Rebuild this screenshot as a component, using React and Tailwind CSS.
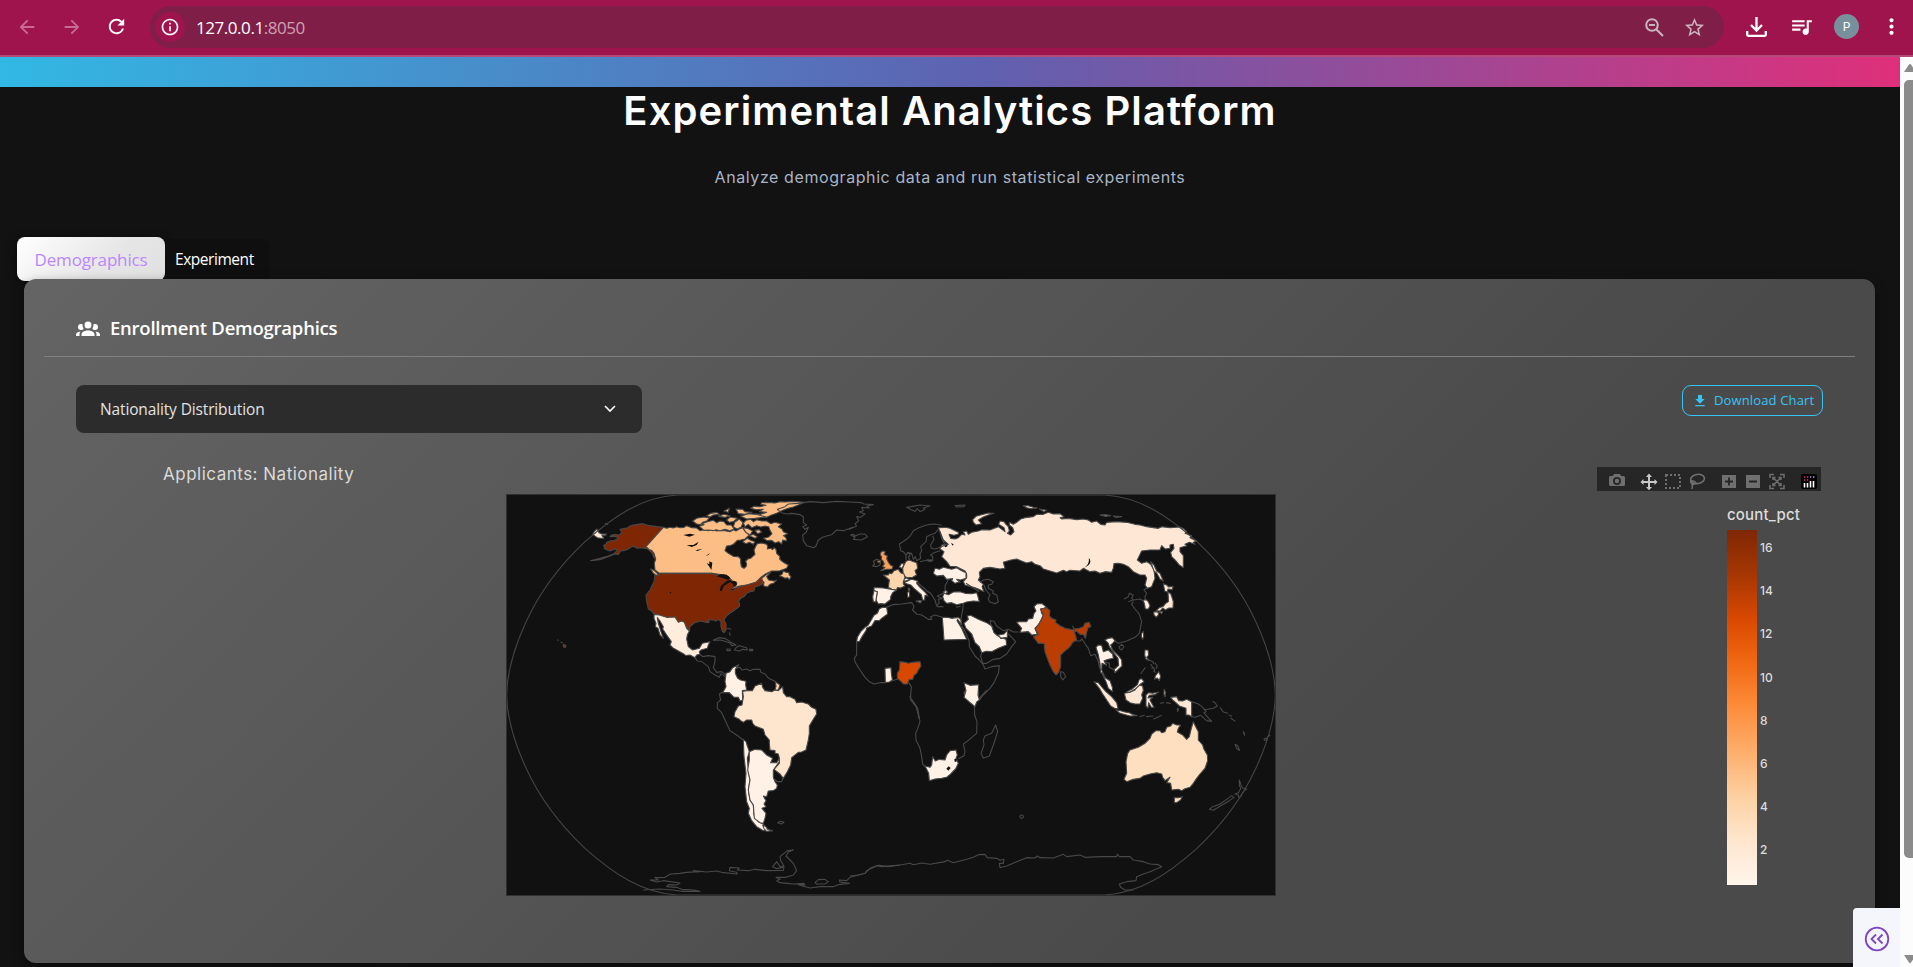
import React from "react";
import {
  MdArrowBack,
  MdArrowForward,
  MdRefresh,
  MdInfoOutline,
  MdZoomOut,
  MdStarBorder,
  MdQueueMusic,
  MdMoreVert,
} from "react-icons/md";

const INTER = "font-['Inter',sans-serif]";
const OPEN = "font-['Open_Sans',sans-serif]";

function BrowserBar() {
  return (
    <header className="flex h-[57px] shrink-0 items-start border-b-2 border-[#b4497a] bg-[#a0144e]">
      <div className="flex h-[53px] w-[150px] shrink-0 items-center pl-[16px] text-[#c96b93]">
        <MdArrowBack size={22} />
        <MdArrowForward size={22} className="ml-[23px]" />
        <MdRefresh size={23} className="ml-[22px] text-white" />
      </div>
      <div className="mt-[6px] flex h-[42px] w-[1574px] shrink-0 items-center rounded-full bg-[#7f1e47] pr-[18px]">
        <div className="ml-[5px] flex h-[30px] w-[30px] items-center justify-center rounded-full bg-[#a0144e] text-white">
          <MdInfoOutline size={20} />
        </div>
        <div className={`${OPEN} mt-[1px] ml-[11px] text-[17px] leading-[24px] tracking-[-0.45px] text-white`}>
          127.0.0.1<span className="text-[#cfa0b4]">:8050</span>
        </div>
        <div className="ml-auto flex items-center gap-[17px] text-[#c9b5be]">
          <svg width="23" height="23" viewBox="0 0 23 23" fill="none" stroke="currentColor" strokeWidth="2">
            <circle cx="9" cy="9" r="5.800" />
            <path d="M13.200 13.200l6.800 6.800M6 9h6" />
          </svg>
          <MdStarBorder size={23} />
        </div>
      </div>
      <div className="flex h-[53px] grow items-center pl-[21px] text-white">
        <svg width="23" height="23" viewBox="0 0 23 23" fill="none" stroke="currentColor" strokeWidth="2.3">
          <path d="M11.500 2v13.500M6 10l5.500 5.500L17 10" />
          <path d="M2.200 16v3.800q0 1 1 1h16.600q1 0 1-1V16" />
        </svg>
        <MdQueueMusic size={25} className="ml-[21px]" />
        <div className={`${INTER} ml-[20px] flex h-[25px] w-[25px] shrink-0 items-center justify-center rounded-full bg-[#78909c] text-[12px]`}>
          P
        </div>
        <MdMoreVert size={25} className="ml-[20px] shrink-0" />
      </div>
    </header>
  );
}

const LINE = "none";
const C = {
  us: "#7f2704",
  ca: "#fdbe85",
  mx: "#feecdc",
  pale: "#fff1e5",
  br: "#fee5ce",
  ru: "#fee8d5",
  au: "#fedfc0",
  de: "#fdd5ad",
  uk: "#fda057",
  ind: "#bb3d02",
  ng: "#d94801",
  sea: "#111111",
};

/* Shapes are grouped by quadrant, three units to a pixel. */
const NORTH_WEST = [
  [C.ru, "M278,148 L284,138 291,132 297,143 305,147 320,147 316,151 306,151 312,160 302,160 292,158 286,154Z"],
  [C.us, "M490,127 L470,125 450,122 438,119 428,116 415,118 400,120 388,124 384,128 368,131 360,133 366,143 358,150 345,149 335,150 330,155 345,154 355,158 350,163 342,167 330,168 320,172 318,177 310,182 315,186 312,190 320,194 330,198 345,192 352,196 342,206 325,213 300,220 272,227 300,224 330,213 345,207 355,208 362,198 375,196 385,192 393,186 400,184 412,190 422,188 437,190 450,194 458,192 464,205 460,212 467,214 468,224 462,218 457,205 448,196 438,188 438,185Z"],
  [C.ca, "M490,127 L500,130 510,127 520,129 530,125 540,128 552,127 560,122 575,128 590,129 600,137 612,134 625,137 638,134 650,138 662,136 675,137 690,140 700,134 708,138 718,132 728,128 738,142 748,150 735,162 722,165 712,166 700,178 690,182 680,183 675,197 685,205 700,214 715,215 722,222 722,232 724,245 732,250 738,245 740,238 737,228 744,222 752,220 765,208 762,195 768,182 772,176 785,174 800,178 803,184 802,192 812,190 818,194 822,188 828,193 830,205 840,215 839,222 845,228 855,235 865,240 860,250 838,258 815,258 798,266 785,275 770,292 740,300 715,304 692,318 694,310 708,303 710,292 695,287 686,276 672,270 636,265 478,265 465,255 463,235 467,222 462,205 455,196 448,194 438,185Z"],
  [C.ca, "M782,282 L795,272 806,264 812,262 800,275 806,285 822,288 830,285 822,294 810,298 802,306 790,302 792,292Z"],
  [C.ca, "M838,272 L846,268 850,258 858,262 866,262 868,270 873,275 868,284 862,278 855,280 848,276Z"],
  [C.ca, "M452,252 L462,256 475,268 468,272 458,262Z"],
  [C.ca, "M912,52 L880,49 855,51 840,50 825,54 800,52 785,53 782,58 798,61 780,65 762,64 752,70 770,74 790,73 778,80 800,82 782,88 765,87 775,96 800,97 815,90 830,85 850,75 865,70 880,66 895,60Z"],
  [C.ca, "M578,108 L590,100 612,96 628,99 620,108 608,112 602,119 590,117Z"],
  [C.ca, "M598,124 L612,119 602,118 622,110 640,106 650,113 660,108 672,110 680,120 694,120 702,132 690,137 675,133 660,137 648,134 640,137 625,135 612,136 605,130Z"],
  [C.ca, "M730,114 L738,106 752,103 760,110 770,104 785,108 800,108 812,116 825,112 845,117 835,125 846,132 850,140 863,146 850,152 858,158 860,168 848,165 845,177 836,170 825,174 815,166 802,167 790,160 806,156 816,146 810,136 806,125 795,123 782,126 770,122 755,128 745,118 735,125Z"],
  [C.ca, "M620,92 L632,85 650,82 658,88 640,90 630,96Z M655,94 L672,88 690,92 676,97Z M672,78 L688,70 685,82Z M680,105 L690,96 712,100 700,110 688,112Z M708,72 L728,73 735,80 756,82 735,88 715,86Z M700,126 L704,112 718,102 729,113 724,126 712,132Z M722,94 L745,86 768,88 798,96 765,100 740,102Z M748,152 L760,148 772,155 765,160Z M728,170 L742,160 752,166 765,170 760,178 748,172 738,176Z M765,136 L778,134 785,142 772,146Z M728,128 L742,130 758,138 750,150 738,142Z"],
  [C.us, "M478,265 L636,265 650,270 672,270 686,276 695,287 710,295 700,308 692,318 715,306 740,300 755,296 770,290 780,280 785,278 788,296 775,303 765,305 762,318 750,320 740,325 732,335 722,340 715,350 719,356 718,365 700,378 685,388 678,395 672,405 678,418 678,435 672,443 667,438 663,425 663,410 655,403 648,408 640,405 625,405 627,412 618,412 600,408 585,413 575,420 570,425 568,438 560,430 553,412 545,408 535,412 525,396 500,398 485,395 475,390 460,385 455,378 445,372 440,350 438,330 450,315 462,290 465,270 475,272Z"],
  [C.mx, "M462,388 L478,390 500,397 525,396 535,412 545,408 553,412 560,430 568,438 562,450 560,462 565,485 578,495 598,490 607,475 630,470 625,480 622,490 605,494 598,500 600,508 590,510 585,518 570,510 558,512 550,506 530,495 518,488 510,480 514,470 500,450 488,432 490,425 480,408 472,398 475,415 483,440 490,460 480,450 474,430 466,425 468,415 462,400Z"],
  [LINE, "M640,466 L655,458 675,460 690,470 708,480 695,482 690,474 672,468 660,465Z M703,495 L710,486 718,482 740,488 742,495 728,493 718,498Z M680,492h10l1,5 -10,0z M748,493l10,0 0,4 -9,0z M680,430l14,3 M688,442l3,10 M315,115l10,4"],
  [LINE, "M585,518 L592,528 604,529 612,535 625,545 630,560 645,570 658,577 663,566 678,577 M600,508 L608,515 625,512 645,515 645,530 640,548 650,562 665,560 678,570"],
  [C.us, "M172,464l4,3 M182,471l6,3 M190,478l8,4 -3,6 -4,-2z"],
  [C.sea, "M550,150L570,146 585,149 568,155Z M560,180L580,180 596,170 590,180 575,186Z M586,196l22,-5 -15,7z M617,213l13,-9 -5,6z M620,234l8,4 0,-9 9,4 -3,22 -6,-10z M650,274L662,268 680,269 690,278 685,285 670,280Z M659,318L662,304 680,288 690,285 700,292 690,292 672,302 665,318Z M690,290L705,288 711,298 700,306 700,298Z M688,316l20,-8 -8,7z M509,322l4,-2 0,6z"],
];

const ATLANTIC = [
  [LINE, "M262,28 L285,20 295,12 325,10 360,5 400,8 440,4 480,6 515,8 522,12 550,14 530,18 538,24 515,22 520,32 508,36 525,42 512,52 500,50 506,62 495,72 500,78 478,88 488,82 460,92 440,90 425,104 410,108 398,112 385,120 378,138 372,143 350,137 340,122 338,105 348,98 355,82 345,88 338,80 350,75 340,68 340,50 330,44 305,40 290,42 275,38Z"],
  [LINE, "M482,105 L490,103 495,108 510,102 525,102 532,110 515,120 490,118 495,112Z M650,22 L668,19 690,15 720,18 700,24 705,28 690,35 682,26 675,34 665,30Z M795,17 L825,15 822,20 800,21Z"],
  [C.uk, "M572,158 L578,153 586,155 582,163 592,168 590,176 596,188 602,196 609,199 606,207 590,208 572,212 585,203 577,199 583,192 579,183 574,178 575,170 571,165Z M562,184l8,-3 1,6 -6,1z"],
  [LINE, "M548,198 L554,192 550,184 560,178 572,182 570,195 560,200Z M648,165 L640,155 632,152 628,132 650,118 662,106 670,92 685,84 700,78 720,73 735,72 755,76 M745,88 L735,100 722,104 710,110 708,125 692,140 695,152 690,162 692,175 680,182 676,170 670,178 665,160 650,158 M750,95 L755,115 765,135 752,142 735,147 724,145 722,135 732,118 728,108 M690,185 L712,180 728,182 728,170 722,165 732,158 750,152 M648,180 L648,165 657,158 660,165 655,172 660,180"],
  [C.de, "M648,184 L658,180 665,183 680,188 683,205 675,212 680,225 668,232 650,233 640,225 638,205 642,195Z"],
  [C.pale, "M628,202 L633,192 641,190 640,198 635,205Z M640,238 L650,234 660,240 645,247Z M645,243 L655,240 665,238 682,242 680,250 690,262 705,276 714,288 705,286 704,300 698,300 694,284 672,265 662,255 645,250Z M678,303 L694,302 692,309Z M652,277l6,-2 1,15 -6,2z"],
  [C.de, "M580,225 L595,225 598,219 605,221 612,212 625,208 632,218 642,222 645,232 640,245 640,252 645,258 632,264 622,263 620,270 605,268 595,262 598,240Z M655,264l4,0 0,8 -4,-1z"],
  [C.pale, "M552,262 L580,264 605,268 620,270 608,278 602,290 602,298 585,312 572,311 565,312 558,300 562,275 552,272Z"],
  [C.pale, "M552,272 L562,275 558,300 557,306 550,305 548,290Z"],
  [LINE, "M682,242 L685,250 700,262 712,274 722,280 735,300 740,318 748,308 745,298 756,296 742,288 760,280 M742,320h18 M798,322l14,-3 M765,275 L766,255 775,240 M800,238 L812,248 M828,250 L868,275 M820,312 L818,330 814,350 812,375"],
  [C.pale, "M735,205 L748,208 760,202 785,208 800,203 815,212 828,218 828,235 812,240 800,238 808,246 795,250 785,242 788,236 770,238 760,226 740,228 730,220Z"],
  [C.pale, "M762,280 L775,284 790,276 810,275 825,280 845,281 860,278 864,290 868,305 850,303 830,306 820,310 800,314 785,308 770,310 762,302 758,290Z M760,276l8,-5 5,6 -8,4z"],
  [C.pale, "M568,326 L578,322 590,322 593,342 575,355 568,362 555,362 545,378 530,384 528,392 515,412 508,425 500,425 502,412 512,395 525,382 535,375 545,358 552,346 562,340Z"],
  [LINE, "M590,322 L608,314 635,312 665,308 672,318 668,330 680,342 695,345 715,358 725,358 722,350 735,345 757,352"],
  [C.pale, "M757,352 L770,352 785,355 805,352 812,358 815,375 803,358 801,362 815,385 830,418 762,420Z"],
  [LINE, "M815,378 L826,395 838,425 838,440 845,452 855,468 868,480 880,495 885,507 905,500 928,497 925,520 912,548 900,565 880,585 868,600 M875,458 L872,470 878,490 890,490 910,478 930,475 950,462 965,440 977,425 965,412 955,402 M908,385 L902,372 900,362 912,364 920,378 930,385 940,392 955,388 970,396 985,396"],
  [C.pale, "M822,370 L835,358 832,348 842,346 865,358 890,368 905,378 912,398 920,405 932,413 948,418 950,435 925,445 905,455 888,454 875,458 868,440 855,428 845,402 828,385Z M925,405 L942,402 952,390 952,412 932,415Z"],
  [LINE, "M500,425 L500,445 500,465 493,475 496,488 510,510 525,532 538,545 552,552 570,548 585,548 606,542 622,538 M656,548 L664,560 662,585 662,600 678,620 685,645 686,655"],
  [C.pale, "M585,505 L603,503 604,520 607,540 598,546 586,547Z M822,548 L840,556 866,554 864,585 868,600 860,606 855,620 838,606 822,592 828,572Z"],
  [C.ng, "M630,485 L645,487 655,490 668,487 690,485 693,498 686,508 680,520 672,526 668,538 658,538 652,552 640,552 634,545 622,535 622,520 628,510Z"],
  [C.pale, "M98,578 L108,560 105,545 108,520 120,515 128,503 146,494 136,508 136,520 143,535 152,540 168,544 167,555 170,570 157,572 158,600 150,603 145,592 132,592 118,578Z"],
  [LINE, "M146,494 L140,505 150,502 156,510 170,507 180,512 190,508 210,508 213,517 225,522 236,535 258,545"],
  [C.de, "M256,545 L270,555 265,570 255,570 258,558Z"],
];

const NORTH_EAST = [
  [C.ru, "M265,128 L285,127 300,130 325,142 325,148 312,151 297,148 302,160 315,162 325,158 335,148 345,150 340,140 350,138 355,148 365,142 385,138 395,134 420,135 445,125 465,140 462,128 446,118 450,108 462,110 468,118 475,125 478,138 472,145 482,150 492,140 488,128 478,120 478,112 490,118 500,112 512,102 525,98 550,95 560,88 580,88 595,82 610,87 630,86 642,95 630,98 635,102 655,100 680,104 700,102 715,105 725,112 740,108 752,118 765,120 770,112 800,110 830,112 855,118 870,120 890,125 925,130 935,125 960,128 990,126 1002,132 1010,140 1005,145 1025,152 1020,158 1040,168 1030,172 1035,178 1018,172 1005,178 1010,182 990,188 990,200 1000,212 1000,248 988,240 978,228 965,215 962,202 972,190 970,178 960,180 960,190 945,192 935,182 930,195 900,195 875,198 862,225 875,235 890,230 902,238 912,255 915,280 905,305 892,310 885,300 890,280 885,270 870,270 850,260 835,245 820,238 805,235 792,236 790,250 785,262 765,260 750,265 735,258 720,260 700,250 690,258 660,256 650,260 640,256 620,264 600,258 580,252 570,242 555,238 545,230 530,234 520,230 500,222 480,226 460,232 465,250 450,252 420,247 400,250 388,262 390,275 385,285 400,298 396,305 402,320 385,312 375,308 345,300 340,290 350,278 350,268 345,258 320,245 300,244 290,230 275,215 282,200 270,192 275,180 295,178 280,165 274,150 270,140Z"],
  [C.ru, "M370,112 L368,104 378,94 400,88 415,84 432,85 415,90 400,96 385,105 395,116 378,120Z M520,62 L535,62 550,67 562,69 545,71 530,68Z M568,72 L590,76 582,80Z M750,90 L765,89 782,92 765,94Z M790,93l25,2 -18,2z M902,230 L912,240 920,258 930,265 940,288 930,282 920,264 912,258Z M232,225l14,0 -3,4 -9,-1z"],
  [LINE, "M390,292 L400,285 415,283 430,290 425,298 415,300 415,310 430,318 428,325 440,330 445,350 435,356 418,350 415,340 420,330 408,315 402,300 M822,342 L835,335 838,325 850,330 845,340 850,345 835,350 M850,345 L870,342 880,348 M850,350 L845,358 855,372 868,388 875,410 872,425 868,445 855,457 830,468 805,475 795,468 M885,345 L885,335 890,325 882,315 892,308 M632,560 L640,562 647,575 638,585 632,575Z M808,485 L815,478 822,485 815,495 808,490Z"],
  [LINE, "M672,455 L680,468 690,468 696,462 706,478 715,490 722,512 735,508 745,530 748,545 755,560"],
  [C.pale, "M880,346 L888,344 895,350 900,362 895,372 886,372 884,360Z"],
  [C.ru, "M940,296 L950,300 956,306 969,304 967,314 954,312 952,321 944,318Z M954,321 L962,326 967,340 970,350 969,369 957,369 946,375 938,369 930,378 918,377 928,368 940,364 946,356 955,350 955,338Z M911,381 L923,380 926,388 919,397 912,390Z M928,381l10,-2 -3,7z"],
  [C.pale, "M500,412 L510,410 530,410 535,402 548,400 552,385 558,378 552,365 560,357 575,355 588,365 582,371 572,372 575,385 580,390 575,402 565,420 555,430 562,448 545,450 535,440 510,442 515,430Z"],
  [C.ind, "M572,372 L590,368 600,378 598,392 605,400 618,405 616,412 630,422 645,430 672,435 680,465 668,472 662,482 655,490 642,500 632,510 632,545 626,562 618,570 610,560 600,540 590,515 585,500 582,475 565,475 550,455 565,448 555,430 565,420 575,402 580,390Z M668,424 L672,432 688,430 700,425 705,415 718,412 722,425 714,428 710,442 706,460 700,448 690,448 680,438 675,440Z"],
  [C.sea, "M282,182l8,-3 4,4 -8,4z M303,174l8,4 -3,4z M716,220l3,2 q8,16 -16,26 q17,-12 13,-28z"],
];

const SOUTH_EAST_ASIA = [
  [C.ru, "M42,245 L55,248 68,264 78,275 95,290 110,308 114,325 106,326 92,318 80,300 68,282 58,265Z M108,330 L122,332 135,336 148,338 155,342 172,347 150,348 120,340Z M133,280 L150,277 165,270 175,255 188,258 190,272 185,284 188,295 180,312 165,312 150,308 138,300Z M198,285 L206,278 218,280 236,276 225,284 208,286 204,294 218,292 210,300 222,322 214,322 206,308 204,324 198,318Z M272,292 L290,290 296,302 308,303 320,298 335,305 335,350 326,345 318,345 318,325 298,318 290,310 278,300Z M252,268l5,8 -2,15 -3,-8z M292,325l3,2 -2,8z"],
  [C.pale, "M65,218 L78,235 90,242 97,262 98,275 85,265 78,245Z M140,275 L158,266 172,254 178,238 185,236 192,245 182,252 165,268 148,277Z M48,142 L55,135 65,136 70,155 85,150 98,162 100,175 85,178 72,182 80,196 66,190 65,210 72,225 62,218 60,190 55,165Z M75,120 L85,115 97,113 105,122 98,130 92,135 98,150 118,170 125,180 126,198 115,208 105,218 103,208 116,196 114,175 98,155 88,140 85,130Z M185,100 L190,95 191,108 188,118 184,110Z M195,150 L204,150 206,165 200,172 208,182 198,178 194,165Z M226,228 L236,215 242,228 238,242 232,234 224,238Z"],
  [LINE, "M72,185 L88,190 88,202 103,210 M182,222 l14,-20 M208,180 L220,186 220,192 M212,192l6,10 M224,188l8,10 -4,8 M214,205l8,-2 2,12 M220,212l6,6 M240,310l12,-2 M258,308l14,2 M178,350l16,-4 M198,350l22,-2 M220,358l25,-12 M335,305 L355,312 366,320 378,335 372,338 386,355 395,364 380,362 362,346 345,352 335,350 M372,330 L400,325 412,318 405,308 398,304 M420,322l10,14 M430,336l14,4 M446,345l10,4 M452,354l14,10 M490,394l4,12"],
];

const SOUTH_WEST = [
  [C.br, "M728,4 L740,2 757,2 765,-12 785,-20 788,-8 795,2 815,5 825,0 835,2 848,-10 850,8 860,20 870,20 885,28 890,38 905,36 925,42 935,52 948,58 950,72 940,88 928,108 928,130 925,150 918,180 905,186 895,187 875,203 872,225 862,245 850,265 840,252 822,238 838,220 838,205 835,192 825,190 825,182 810,180 808,160 808,150 795,135 790,118 765,108 758,100 755,90 740,90 730,97 722,92 718,88 702,80 705,65 715,48 726,45 730,20Z"],
  [C.pale, "M730,148 L738,155 742,168 748,185 742,205 745,240 750,270 745,300 750,330 760,345 762,375 775,395 790,402 795,412 810,422 790,422 770,410 755,392 745,370 748,355 740,335 735,290 738,250 732,200Z"],
  [C.pale, "M748,185 L765,178 785,180 800,195 818,205 812,218 830,218 838,205 838,215 820,240 820,262 825,275 832,285 830,295 820,302 805,303 800,320 790,318 798,332 792,342 798,350 786,355 798,370 795,385 790,400 780,398 763,385 760,345 750,330 745,300 750,270 743,240 748,210Z M788,405 L798,410 802,418 818,422 800,424 792,416Z"],
  [LINE, "M668,6 L658,12 662,30 652,38 652,55 665,68 675,90 690,122 710,135 730,150 M820,265 L832,275 845,275 850,262 M833,398 l8,-4 11,3 -8,5Z"],
  [LINE, "M430,600 L480,597 520,600 545,604 600,604 580,600 545,598 530,592 500,590 505,584 530,585 540,579 510,575 490,572 470,576 450,570 475,570 465,563 495,562 512,552 540,550 560,547 600,545 580,542 620,546 650,543 670,548 712,552 710,547 688,542 690,532 718,534 712,540 745,542 765,538 800,542 850,541 852,532 830,536 818,530 830,515 840,530 852,528 842,512 840,500 852,490 862,482 880,480 865,486 858,498 870,510 880,520 890,542 880,555 858,562 828,562 840,568 830,572 840,578 862,580 880,582 912,580 915,585 895,584 930,594 960,590 1000,590 1015,584 1048,580 1020,576 1018,570 1040,572 1050,562 1095,550 1100,542 1125,530 1135,526 1165,530 1200,525 M945,578 L955,569 975,568 985,575 975,582 950,582Z"],
];

const SOUTH_EAST = [
  [LINE, "M182,15 L180,22 190,35 203,55 210,95 205,110 197,130 198,150 210,175 215,200 218,222 228,232 M385,28 L410,0 M373,45 L374,75 381,95 380,130 368,140 350,155 340,162 345,185 342,197 325,206"],
  [C.pale, "M342,10 L350,-5 385,-10 385,20 373,48 355,30Z"],
  [C.pale, "M225,228 L240,232 245,225 248,200 256,213 268,208 285,210 290,195 300,182 318,180 322,195 318,205 325,220 318,235 302,252 290,262 275,265 255,267 238,272 236,250Z"],
  [C.sea, "M289,236 l7,-7 6,5 -7,8z M313,207 l7,-1 0,9 -6,0z"],
  [LINE, "M437,105 L443,125 435,150 430,165 418,198 400,205 393,190 402,165 400,150 405,138 425,130Z M515,375a5,5 0 1,0 .1,0z"],
  [C.au, "M833,190 L840,180 865,172 885,160 900,145 905,132 918,122 930,122 935,128 945,125 950,112 962,108 968,100 980,105 992,105 985,115 982,126 998,135 1010,148 1018,140 1024,115 1030,95 1038,112 1045,125 1045,150 1058,165 1062,178 1072,195 1073,212 1065,235 1050,252 1040,265 1030,280 1020,292 1005,296 995,302 985,298 965,300 962,280 950,278 960,262 945,272 938,262 935,252 920,248 900,252 880,258 870,265 850,268 830,275 822,268 830,250 828,215Z M973,322 L985,323 997,320 992,330 980,338 973,338Z"],
  [LINE, "M1168,270 L1174,288 1178,294 1190,297 1180,305 1172,320 1166,322 1165,315 1155,312 1165,308 1172,296 1168,285Z M1145,317 L1152,322 1138,332 1125,340 1105,352 1090,361 1078,358 1085,352 1110,342 1130,328Z M1180,125l4,12 M1155,163l8,4 6,14 -8,-4z M1242,147l8,-3 0,6 -6,1z M1252,140l9,-4"],
  [LINE, "M0,558 L25,555 45,550 60,535 80,527 95,530 150,525 180,520 190,524 215,519 240,523 285,515 292,511 310,518 350,508 370,502 385,494 405,493 412,503 440,505 450,511 462,508 460,520 448,520 450,533 470,528 500,515 530,503 555,504 562,498 570,503 610,504 640,493 650,500 690,495 705,502 750,500 800,500 802,492 808,500 840,500 850,510 880,515 900,522 925,524 935,530 900,545 880,552 860,560 858,572 830,575 808,582 812,592 825,600 850,600"],
];

function Shapes({ data, at }) {
  return (
    <g transform={`translate(${at}) scale(0.33333)`} strokeWidth="3.300" strokeLinejoin="round">
      {data.map(([fill, d], i) => (
        <path key={i} d={d} fill={fill} stroke={fill === C.sea ? "none" : "#484848"} />
      ))}
    </g>
  );
}

function WorldMap() {
  return (
    <svg className="block shrink-0" width="770" height="402" viewBox="506 494 770 402">
      <rect x="506" y="494" width="770" height="402" fill="#111111" />
      <Shapes data={SOUTH_WEST} at="500 690" />
      <Shapes data={NORTH_WEST} at="500 485" />
      <Shapes data={NORTH_EAST} at="850 485" />
      <Shapes data={SOUTH_EAST} at="850 690" />
      <Shapes data={ATLANTIC} at="690 500" />
      <Shapes data={SOUTH_EAST_ASIA} at="1080 600" />
      <path
        d="M1105,495 C1140,497 1168,516 1197,541.700 C1225,568 1245,598 1256,622 C1268,648 1275,672 1275.300,695 C1275,718 1268,742 1256,768 C1245,792 1225,822 1197,848.300 C1168,874 1140,893 1105,895 H677 C642,893 614,874 585,848.300 C557,822 537,792 526,768 C514,742 507,718 506.700,695 C507,672 514,648 526,622 C537,598 557,568 585,541.700 C614,516 642,497 677,495Z"
        fill="none"
        stroke="#444444"
        strokeWidth="1.100"
      />
      <rect x="506.500" y="494.500" width="769" height="401" fill="none" stroke="#303030" />
    </svg>
  );
}

function Modebar() {
  return (
    <div className="flex h-[24px] w-[224px] items-center bg-[#262626]">
      <svg width="224" height="24" viewBox="0 0 224 24" fill="#6f6f6f">
        <path fillRule="evenodd" d="M12 10.500q0-1.500 1.500-1.500h2.500l1-2h6l1 2h2.500q1.500 0 1.500 1.500v7q0 1.500-1.500 1.500h-13q-1.500 0-1.500-1.500zM20 10a4 4 0 1 0 0 8 4 4 0 0 0 0-8zm0 1.800a2.200 2.200 0 1 1 0 4.400 2.200 2.200 0 0 1 0-4.400z" />
        <path fill="#c8c8c8" d="M52 6.500l3 3.500h-2v4h4.500v-2l3 3-3 3v-2H53v4h2l-3 3.300-3-3.300h2v-4h-4.500v2l-3-3 3-3v2H51V10h-2z" />
        <rect x="69" y="8" width="14" height="13" fill="none" stroke="#6f6f6f" strokeWidth="2" strokeDasharray="2 2" />
        <g fill="none" stroke="#6f6f6f" strokeWidth="1.600">
          <ellipse cx="100.500" cy="12" rx="7" ry="4.600" transform="rotate(-10 100.500 12)" />
          <path d="M94 14q3-1 5 2-2 2-4 .5-2-1.500-1-2.500zM95 17q1 2 0 5" />
        </g>
        <path d="M125 8h14v13h-14z M149 8h14v13h-14z" />
        <path d="M128 14.500h8M132 10.500v8M152 14.500h8" stroke="#262626" strokeWidth="1.800" />
        <g fill="none" stroke="#6f6f6f" strokeWidth="1.500">
          <path d="M173 11V7.500h4M183 7.500h4V11M187 18v3.500h-4M177 21.500h-4V18" />
          <path d="M176 10.500l8 8M184 10.500l-8 8M176 13v-2.500h2.500M181.500 10.500h2.500V13M184 16v2.500h-2.500M178.500 18.500H176V16" />
        </g>
        <rect x="204" y="7" width="16" height="15" rx="2" fill="#000000" />
        <path d="M207.500 16v4.500M210.500 16v4.500M213.500 14v6.500M216.500 14v6.500" stroke="#ffffff" strokeWidth="1.600" />
        <path d="M207 10h1.300M207 13h1.300M210 10h1.300M210 13h1.300" stroke="#f0256b" strokeWidth="1.300" />
        <path d="M213 10h1.300" stroke="#b98cff" strokeWidth="1.300" />
        <path d="M216 10h1.300" stroke="#66e0ff" strokeWidth="1.300" />
      </svg>
    </div>
  );
}

function ColorBar() {
  return (
    <div className={`${INTER} mt-[11px] flex w-[96px] flex-col text-[#dcdcdc]`}>
      <div className="h-[25px] text-[15px] leading-[19px] font-medium tracking-[0.200px]">count_pct</div>
      <div className="flex">
        <div className="h-[355px] w-[30px] bg-[linear-gradient(to_top,#fff5eb_0%,#fee6ce_12.5%,#fdd0a2_25%,#fdae6b_37.5%,#fd8d3c_50%,#f16913_62.5%,#d94801_75%,#a63603_87.5%,#7f2704_100%)]" />
        <div className="flex flex-col pt-[7px] pl-[3px] text-[12px] leading-[22px] font-medium">
          {[16, 14, 12, 10, 8, 6, 4, 2].map((n) => (
            <span key={n} className="h-[43.2px]">
              {n}
            </span>
          ))}
        </div>
      </div>
    </div>
  );
}

function Panel() {
  return (
    <section className="relative z-10 ml-[24px] flex h-[684px] w-[1851px] shrink-0 flex-col rounded-[12px] bg-[linear-gradient(135deg,#646464_0%,#4a4a4a_70%,#4a4a4a_100%)] shadow-[0_4px_12px_rgba(0,0,0,0.4)]">
      <div className="mx-[20px] flex h-[78px] items-center gap-[10px] border-b border-[#808080] pt-[20px] pl-[32px] text-white">
        <svg width="24" height="24" viewBox="0 0 24 24" fill="currentColor">
          <path d="M12 5.500A3.500 3.500 0 0 1 15.500 9A3.500 3.500 0 0 1 12 12.500A3.500 3.500 0 0 1 8.500 9A3.500 3.500 0 0 1 12 5.500M5 8C5.560 8 6.080 8.150 6.530 8.420C6.380 9.850 6.800 11.270 7.660 12.380C7.160 13.340 6.160 14 5 14A3 3 0 0 1 2 11A3 3 0 0 1 5 8M19 8A3 3 0 0 1 22 11A3 3 0 0 1 19 14C17.840 14 16.840 13.340 16.340 12.380C17.200 11.270 17.620 9.850 17.470 8.420C17.920 8.150 18.440 8 19 8M5.500 18.250C5.500 16.180 8.410 14.500 12 14.500C15.590 14.500 18.500 16.180 18.500 18.250V20H5.500V18.250M0 20V18.500C0 17.110 1.890 15.940 4.450 15.600C3.860 16.280 3.500 17.220 3.500 18.250V20H0M24 20H20.500V18.250C20.500 17.220 20.140 16.280 19.550 15.600C22.110 15.940 24 17.110 24 18.500V20Z" />
        </svg>
        <h2 className={`${OPEN} text-[18.5px] leading-[26px] font-semibold tracking-[-0.23px]`}>
          Enrollment Demographics
        </h2>
      </div>
      <div className="mt-[28px] flex h-[82px] items-start justify-between pr-[52px] pl-[52px]">
        <div className={`${OPEN} flex h-[48px] w-[566px] items-center justify-between rounded-[8px] bg-[#2c2c2c] pr-[26px] pl-[24px] text-[15.5px] tracking-[-0.14px] text-[#e2e2e2]`}>
          <span className="pt-[2px]">Nationality Distribution</span>
          <svg width="12" height="8" viewBox="0 0 12 8" fill="none" stroke="#ffffff" strokeWidth="1.600">
            <path d="M1 1l5 5 5-5" />
          </svg>
        </div>
        <button className={`${OPEN} flex h-[31px] w-[141px] items-center rounded-[9px] border border-[#37c5f7] pl-[9px] text-[13px] tracking-[0.14px] whitespace-nowrap text-[#37c5f7]`}>
          <svg className="mr-[6px] shrink-0" width="16" height="16" viewBox="0 0 24 24" fill="currentColor">
            <path d="M5,20H19V18H5M19,9H15V3H9V9H5L12,16L19,9Z" />
          </svg>
          <span className="pt-[1px]">Download Chart</span>
        </button>
      </div>
      <div className="flex h-[27px] items-start justify-between pr-[54px] pl-[139px]">
        <div className={`${INTER} text-[17px] leading-[14px] tracking-[0.5px] text-[#d9d9d9]`}>
          Applicants: Nationality
        </div>
        <Modebar />
      </div>
      <div className="flex pl-[482px]">
        <WorldMap />
        <div className="ml-[451px]">
          <ColorBar />
        </div>
      </div>
    </section>
  );
}

export default function App() {
  return (
    <div className="flex h-[967px] w-[1913px] flex-col overflow-hidden bg-[#121212]">
      <BrowserBar />
      <div className="flex h-[910px]">
        <main className="relative flex w-[1900px] shrink-0 flex-col">
          <div className="h-[30px] shrink-0 bg-[linear-gradient(90deg,#31b8e4_0%,#5f61b0_52%,#df2f7a_100%)]" />
          <h1 className={`${INTER} h-[48px] text-center text-[40px] leading-[48px] font-semibold tracking-[1.1px] text-white`}>
            Experimental Analytics Platform
          </h1>
          <p className={`${INTER} mt-[30px] h-[24px] text-center text-[16px] leading-[24px] tracking-[0.58px] text-[#a9b4c6]`}>
            Analyze demographic data and run statistical experiments
          </p>
          <nav className={`${OPEN} mt-[48px] -mb-[2px] flex h-[44px] shrink-0 items-start pl-[17px]`}>
            <div className="flex h-[44px] w-[148px] items-center justify-center rounded-[8px] bg-[linear-gradient(135deg,#ffffff_0%,#e6e6e6_60%,#e0e0e0_100%)] pt-[2px] text-[17px] tracking-[-0.16px] text-[#bb86fc] shadow-[0_2px_10px_rgba(0,0,0,0.5)]">
              Demographics
            </div>
            <div className="mt-[2px] flex h-[40px] w-[105px] items-center rounded-tr-[8px] bg-[#0f0f0f] pt-[2px] pl-[10px] text-[15.5px] tracking-[-0.45px] text-white">
              Experiment
            </div>
          </nav>
          <Panel />
          <div className="absolute right-0 bottom-0 z-20 flex h-[59px] w-[47px] items-center justify-center rounded-tl-[4px] bg-[#f5f6fb] pt-[2px]">
            <svg width="26" height="26" viewBox="0 0 26 26" fill="none" stroke="#7b45c4" strokeWidth="1.800">
              <circle cx="13" cy="13" r="11.300" />
              <path d="M12 8.500L7.500 13l4.500 4.500M18.500 8.500L14 13l4.500 4.500" />
            </svg>
          </div>
        </main>
        <div className="flex w-[13px] flex-col bg-[#fcfcfc] pl-[4px]">
          <svg className="mt-[6px] shrink-0" width="9" height="10" viewBox="0 0 9 10">
            <path d="M0 9L5 1.500Q6 .5 7 1.500L12 9z" fill="#8b8b8b" />
          </svg>
          <div className="mt-[7px] h-[778px] w-[9px] rounded-l-[5px] bg-[#8b8b8b]" />
          <svg className="mt-auto mb-[3px] shrink-0" width="9" height="10" viewBox="0 0 9 10">
            <path d="M0 1L5 8.500Q6 9.500 7 8.500L12 1z" fill="#8b8b8b" />
          </svg>
        </div>
      </div>
    </div>
  );
}
